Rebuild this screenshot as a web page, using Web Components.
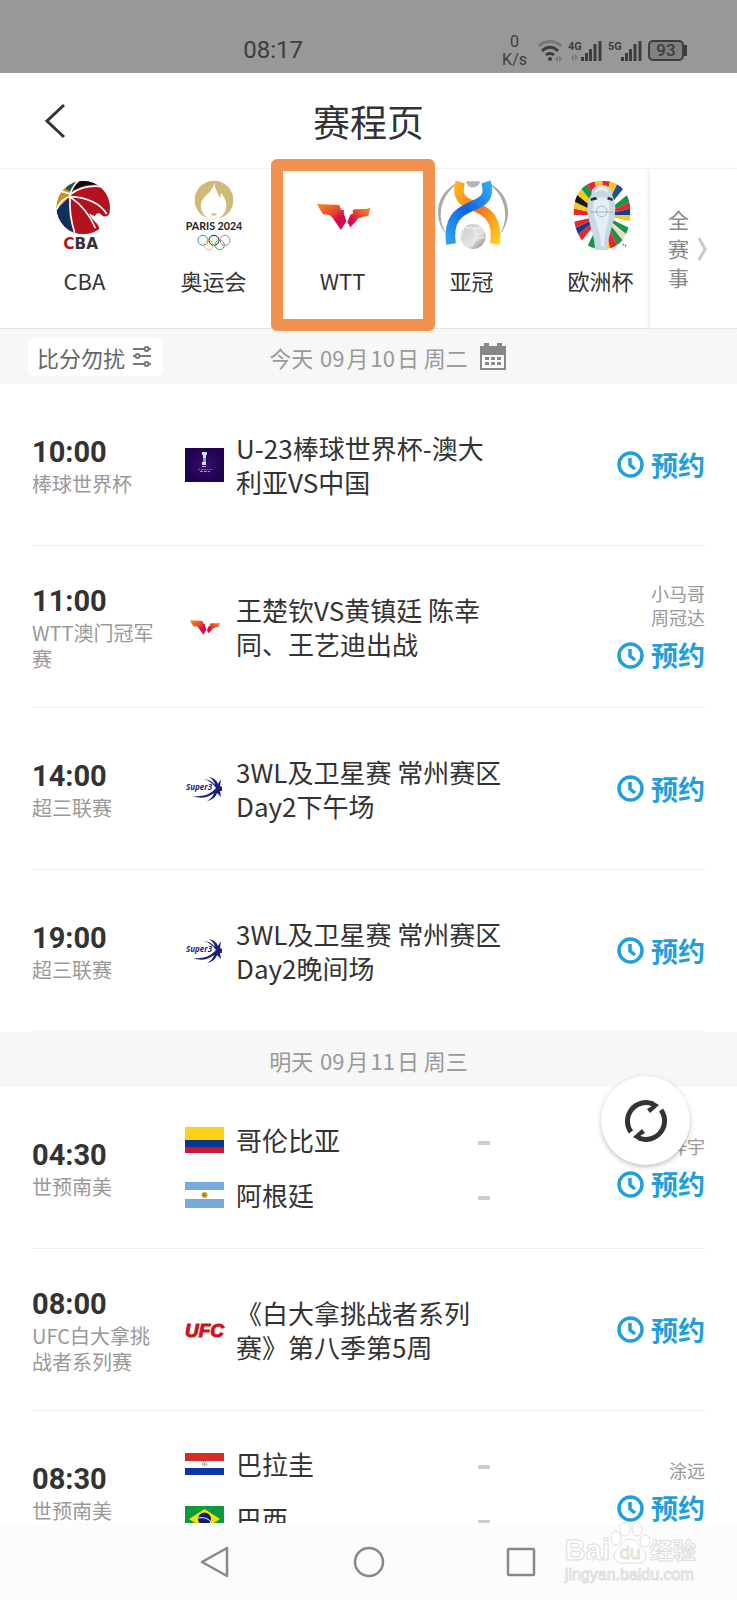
<!DOCTYPE html>
<html lang="zh-CN">
<head>
    <meta charset="UTF-8">
    <meta name="viewport" content="width=device-width, initial-scale=1.0">
    <title>赛程页</title>
    <style>
        body {
            margin: 0;
            background: #fff;
            color: #333;
            font-family: "Noto Sans CJK SC", sans-serif;
        }

        date-bar span {
            padding: 0 2px;
        }
    </style>
</head>
<body>
    <schedule-app>
        <status-bar slot="top" time="08:17"></status-bar>
        <page-header slot="top">赛程页</page-header>
        <league-tabs slot="top">
            <league-tab logo="cba">CBA</league-tab>
            <league-tab logo="paris">奥运会</league-tab>
            <league-tab logo="wtt" marked>WTT</league-tab>
            <league-tab logo="acl">亚冠</league-tab>
            <league-tab logo="euro">欧洲杯</league-tab>
        </league-tabs>

        <date-bar tools>今天 <span>09</span>月<span>10</span>日 周二</date-bar>
        <match-row time="10:00" league="棒球世界杯">
            <match-event logo="baseball">U-23棒球世界杯-澳大利亚VS中国</match-event>
        </match-row>
        <match-row time="11:00" league="WTT澳门冠军赛" hosts="小马哥,周冠达">
            <match-event logo="wtt">王楚钦VS黄镇廷 陈幸同、王艺迪出战</match-event>
        </match-row>
        <match-row time="14:00" league="超三联赛">
            <match-event logo="super3">3WL及卫星赛 常州赛区Day2下午场</match-event>
        </match-row>
        <match-row time="19:00" league="超三联赛" last>
            <match-event logo="super3">3WL及卫星赛 常州赛区Day2晚间场</match-event>
        </match-row>

        <date-bar>明天 <span>09</span>月<span>11</span>日 周三</date-bar>
        <match-row time="04:30" league="世预南美" hosts="梓宇">
            <team-line logo="colombia">哥伦比亚</team-line>
            <team-line logo="argentina">阿根廷</team-line>
        </match-row>
        <match-row time="08:00" league="UFC白大拿挑战者系列赛">
            <match-event logo="ufc">《白大拿挑战者系列赛》第八季第5周</match-event>
        </match-row>
        <match-row time="08:30" league="世预南美" hosts="涂远">
            <team-line logo="paraguay">巴拉圭</team-line>
            <team-line logo="brazil">巴西</team-line>
        </match-row>

        <refresh-button slot="float"></refresh-button>
        <home-bar slot="bottom"></home-bar>
        <page-watermark slot="float"></page-watermark>
    </schedule-app>

    <script>
        // coloured rays behind the Euro trophy
        function rays() {
            const colors = ['#e8262b', '#f7c81e', '#1d4f9f', '#fff', '#169447', '#e8262b', '#12418c', '#f7c81e',
                '#fff', '#169447', '#e8dfc8', '#2a8a4b', '#e8262b', '#f7c81e', '#1a1a1a', '#169447', '#fff', '#e8262b',
                '#12418c', '#e8262b', '#fff', '#e8262b', '#f7c81e', '#1a1a1a', '#f7c81e', '#169447', '#e8262b', '#f7c81e'];
            const step = Math.PI * 2 / colors.length;
            return colors.map((c, i) => {
                const a = -Math.PI / 2 + i * step;
                const p = (t) => `${Math.round(632 + 150 * Math.cos(t))},${Math.round(195 + 150 * Math.sin(t))}`;
                return `<polygon points="632,195 ${p(a)} ${p(a + step)}" fill="${c}"/>`;
            }).join('');
        }

        const LOGOS = {
            cba: `<svg viewBox="60 90 210 210">
                <defs><clipPath id="b"><circle cx="160" cy="173" r="80"/></clipPath></defs>
                <g clip-path="url(#b)">
                    <path fill="#b5121f" d="M75 88h170v170H75z"/>
                    <path fill="#d08e1c" d="M75 88h42l4 46-6 10-37 40z"/>
                    <path fill="#1f5a45" d="M108 88h36l-18 38-18-8z"/>
                    <path fill="#0d0d0f" d="M142 88h62l6 14-44 4-36 14z"/>
                    <path fill="#0f2f5c" d="M78 180l38-36 2 56 14 50H78z"/>
                </g>
                <path d="M208 236c-2-10-8-16-18-26-8-8-12-14-12-20 8 6 14 10 18 6 4-8 12-8 18-2 8 8 16 8 28-6l8 40-22 20z" fill="#fff"/>
                <g fill="none" stroke="#fff" stroke-width="5">
                    <path d="M80 178c10-22 24-36 42-38 50 2 90 22 108 52"/>
                    <path d="M146 92c-20 18-26 32-26 50-2 40 2 70 14 106"/>
                    <path d="M94 124l28 8c24-18 56-28 96-22"/>
                    <path d="M122 142c30 20 56 50 74 92"/>
                </g>
                <text x="100" y="297" font-family="DejaVu Sans" font-weight="700" font-size="46" fill="#333"><tspan fill="#b5121f">C</tspan>BA</text>
            </svg>`,
            paris: `<svg viewBox="447 90 210 210">
                <circle cx="552" cy="150" r="58" fill="#d0ba79"/>
                <path fill="#fff" d="M552 99c4 18 8 22 12 32 2 5 4 8 4 12 5-4 5-9 5-16 12 18 20 34 14 52-5 15-15 25-27 29h-19c-12-5-22-15-27-29-6-22 6-34 18-46 12-11 18-20 20-34z"/>
                <path d="M543 192c6-3 12-3 18 0-4 6-14 6-18 0z" fill="#d0ba79"/>
                <text x="552" y="240" text-anchor="middle" font-family="Lato" font-weight="700" font-size="32" fill="#222">PARIS 2024</text>
                <g fill="none" stroke-width="3">
                    <circle cx="519" cy="271" r="15" stroke="#2f8fcb"/>
                    <circle cx="552" cy="271" r="15" stroke="#222"/>
                    <circle cx="585" cy="271" r="15" stroke="#e2707f"/>
                    <circle cx="536" cy="285" r="14" stroke="#e9c552"/>
                    <circle cx="569" cy="285" r="14" stroke="#3fae79"/>
                </g>
            </svg>`,
            wtt: `<svg viewBox="831 90 210 210">
                <defs>
                    <linearGradient id="l" x1="0" y1="0" x2=".8" y2="1"><stop offset=".1" stop-color="#f58220"/><stop offset=".5" stop-color="#e8402f"/><stop offset=".7" stop-color="#d70b4a"/></linearGradient>
                    <linearGradient id="r" x1="1" y1="0" x2="0" y2="1"><stop offset=".1" stop-color="#f58220"/><stop offset=".45" stop-color="#e8402f"/><stop offset=".7" stop-color="#d70b4a"/></linearGradient>
                </defs>
                <path fill="url(#l)" d="M858 162l67 3 5 14 10 2-2 8 8 24-16 27-25-36-9-9-20-2-10-16z"/>
                <path fill="url(#r)" d="M1018 174l-14 3-34 1-6 4 3 8-9 4-9 23 9 15 14-15 10-12 12-4 18-4z"/>
            </svg>`,
            acl: `<svg viewBox="137 90 210 210">
                <defs>
                    <linearGradient id="o" x1="0" y1="0" x2="1" y2="1"><stop offset="0" stop-color="#ffb21c"/><stop offset=".5" stop-color="#f4731c"/><stop offset="1" stop-color="#ffcb1e"/></linearGradient>
                    <linearGradient id="u" x1="1" y1="0" x2="0" y2="1"><stop offset="0" stop-color="#2fa8f2"/><stop offset=".5" stop-color="#1260e0"/><stop offset="1" stop-color="#29a3ee"/></linearGradient>
                    <linearGradient id="g" x1="0" y1="0" x2="1" y2="1"><stop offset="0" stop-color="#c9c9c9"/><stop offset=".6" stop-color="#e4e4e4"/><stop offset="1" stop-color="#777"/></linearGradient>
                </defs>
                <path fill="#aaa" d="M208 94c-78 30-86 116-40 162-34-46-26-120 40-162zM282 94c78 30 86 116 40 162 34-46 26-120-40-162z"/>
                <path fill="#b5b5b5" d="M224 94h42c-4 24-38 26-42 0z"/>
                <g fill="none" stroke-width="29">
                    <path stroke="url(#o)" d="M207 96C190 150 226 158 256 172S322 206 311 282"/>
                    <path stroke="url(#u)" d="M284 96C301 150 264 158 234 172S168 206 179 282"/>
                </g>
                <circle cx="245" cy="259" r="38" fill="url(#g)"/>
                <path d="M218 232l32 4 28-4M250 236l4 30-14 24M254 266l26-4M218 232l-10 30" stroke="#f5f5f5" stroke-width="3" fill="none"/>
            </svg>`,
            euro: `<svg viewBox="523 90 210 210">
                <defs><clipPath id="e"><path d="M632 92c52 0 84 34 84 94 0 68-30 112-84 112s-86-44-86-112c0-60 34-94 86-94z"/></clipPath></defs>
                <g clip-path="url(#e)">${rays()}</g>
                <path fill="#c5d9e6" d="M600 132c-4-36 64-36 60 0l6 14c18 46-18 96-18 154h-38c0-58-36-108-18-154z"/>
                <path fill="#f8e7e2" d="M610 130c-2-26 42-26 40 0-14-12-28-12-40 0z"/>
                <path fill="#e4eef4" d="M610 148c14-8 28-8 40 0 14 42-12 84-12 140h-10c0-56-36-98-18-140z"/>
                <path d="M596 146l14-6 8 8-20 5zM664 146l-14-6-4 8 16 5z" fill="#2b2f45"/>
                <circle cx="630" cy="184" r="16" fill="none" stroke="#7f9db4" stroke-width="2"/>
                <path d="M596 186h68" stroke="#7f9db4" stroke-width="2"/>
                <path d="M692 284h6M702 284v7" stroke="#4a6a80" stroke-width="3"/>
            </svg>`,
            baseball: `<svg viewBox="0 0 39 34">
                <defs><radialGradient id="p"><stop offset="0" stop-color="#3b0a70"/><stop offset="1" stop-color="#1f0350"/></radialGradient></defs>
                <path fill="url(#p)" d="M0 0h39v34H0z"/>
                <path fill="#d8e4ff" d="M17 4h5v3h-1v3h-3V7h-1zM17 14h4v3h-4z"/>
                <path fill="#6aa9e8" d="M18 10h3v4h-3z"/>
                <path stroke="#b9a3d8" d="M17 18.500h4"/>
                <path stroke="#a2508f" stroke-dasharray="2 1" d="M13 21.500h14"/>
                <path stroke="#9e92bd" stroke-dasharray="3 1" d="M15 23.500h10"/>
            </svg>`,
            super3: `<svg viewBox="0 0 39 28">
                <text x="1" y="15" font-family="Open Sans" font-style="italic" font-weight="700" font-size="8" fill="#1a1f7a">Super3</text>
                <path fill="#1a1f7a" d="M18 4c5 0 9 2 12 6-1-4-3-6-6-8 5 1 8 4 9 7l3-5-1 7 2 1v4h-2l1 6-4-4c-1 4-5 7-10 8 4-2 6-5 7-8-6 5-14 6-21 3 9 1 16-1 21-6l2-2c-3-4-7-8-13-9z"/>
            </svg>`,
            ufc: `<svg viewBox="0 0 39 26">
                <text x="0" y="20" font-family="Liberation Sans" font-style="italic" font-weight="700" font-size="19" fill="#c8141c" stroke="#c8141c">UFC</text>
            </svg>`,
            colombia: `<svg viewBox="0 0 39 26"><path fill="#fcd21b" d="M0 0h39v13H0z"/><path fill="#0a3690" d="M0 13h39v7H0z"/><path fill="#cc1433" d="M0 20h39v6H0z"/></svg>`,
            argentina: `<svg viewBox="0 0 39 26"><path fill="#75aadb" d="M0 0h39v26H0z"/><path fill="#fff" d="M0 8h39v9H0z"/><circle cx="19.500" cy="13" r="3" fill="#d09a3a"/><circle cx="19.500" cy="13" r="1" fill="#8a5a20"/></svg>`,
            paraguay: `<svg viewBox="0 0 39 22"><path fill="#d22e25" d="M0 0h39v8H0z"/><path fill="#fff" d="M0 8h39v7H0z"/><path fill="#0c36a5" d="M0 15h39v7H0z"/><circle cx="19.500" cy="11" r="2.500" fill="none" stroke="#999" stroke-dasharray="2 1"/><circle cx="19.500" cy="11" r="1" fill="#6a8a5a"/></svg>`,
            brazil: `<svg viewBox="0 0 39 26"><path fill="#0a9b3b" d="M0 0h39v26H0z"/><path fill="#fee000" d="M19.500 3L35 13 19.500 23 4 13z"/><circle cx="19.500" cy="13" r="6.500" fill="#0b2170"/><path d="M13 12c5-1 10 0 13 4" stroke="#fff" fill="none"/></svg>`
        };

        function define(name, render) {
            customElements.define(name, class extends HTMLElement {
                constructor() {
                    super();
                    this.attachShadow({ mode: 'open' });
                }

                connectedCallback() {
                    this.shadowRoot.innerHTML = render(this);
                }
            });
        }

        define('schedule-app', () => `
            <style>
                :host {
                    display: flex;
                    flex-direction: column;
                    height: 100vh;
                    position: relative;
                }
                main {
                    flex: 1;
                    min-height: 0;
                    overflow: hidden;
                }
            </style>
            <slot name="top"></slot>
            <main><slot></slot></main>
            <slot name="bottom"></slot>
            <slot name="float"></slot>
        `);

        define('status-bar', (el) => `
            <style>
                :host {
                    display: flex;
                    justify-content: space-between;
                    box-sizing: border-box;
                    height: 73px;
                    padding: 28px 50px 0 33%;
                    background: #989898;
                    color: #3d3d3d;
                    font-family: Roboto, sans-serif;
                }
                time {
                    font-size: 24px;
                    line-height: 45px;
                }
                .icons {
                    display: flex;
                    gap: 6px;
                    height: 45px;
                    align-items: center;
                }
                .speed {
                    font-size: 16px;
                    line-height: 18px;
                    text-align: center;
                    margin-right: 5px;
                }
                svg { display: block; }
                .battery {
                    display: flex;
                    align-items: center;
                }
                .battery span {
                    width: 32px;
                    border: 2px solid #3d3d3d;
                    border-radius: 5px;
                    font-size: 17px;
                    font-weight: 500;
                    line-height: 17px;
                    text-align: center;
                    background: #808080;
                }
                .battery i {
                    width: 3px;
                    height: 11px;
                    background: #3d3d3d;
                }
            </style>
            <time>${el.getAttribute('time')}</time>
            <div class="icons">
                <div class="speed">0<br>K/s</div>
                <svg width="24" height="22" viewBox="0 0 24 22" fill="none" stroke="#3d3d3d" stroke-width="3">
                    <path d="M1 6c6-6 16-6 22 0" stroke="#777"/>
                    <path d="M4 11c5-5 11-5 16 0M8 15c2-2 6-2 8 0"/>
                    <circle cx="12" cy="19" r="1" stroke-width="2"/>
                    <path d="M17 19l3-3v6zM24 19l-3-3v6z" fill="#777" stroke="none"/>
                </svg>
                ${['4G', '5G'].map((g) => `<svg width="34" height="22" viewBox="0 0 34 22">
                    <text y="10" font-family="Roboto" font-weight="700" font-size="11" fill="#3d3d3d">${g}</text>
                    <path d="M14.500 21v-4M18.500 21v-8M22.500 21v-12M27 21V4M32 21V1" stroke="#3d3d3d" stroke-width="3"/>
                    ${g === '4G' ? '<path d="M3 18l3-4v7M7 14v7l3-4" fill="#777"/>' : ''}
                </svg>`).join('')}
                <div class="battery"><span>93</span><i></i></div>
            </div>
        `);

        define('page-header', () => `
            <style>
                :host {
                    display: grid;
                    grid-template-columns: 1fr auto 1fr;
                    align-items: center;
                    height: 95px;
                    border-bottom: 1px solid #f0f0f0;
                }
                button {
                    justify-self: start;
                    margin-left: 44px;
                    padding: 0;
                    border: 0;
                    background: none;
                }
                svg { display: block; }
                h1 {
                    margin: 0;
                    font-size: 37px;
                    font-weight: 400;
                }
            </style>
            <button aria-label="返回">
                <svg width="24" height="36" viewBox="0 0 24 36"><path d="M20 2L3 18l17 16" fill="none" stroke="#333" stroke-width="3"/></svg>
            </button>
            <h1><slot></slot></h1>
        `);

        define('league-tabs', () => `
            <style>
                :host {
                    display: flex;
                    height: 159px;
                    border-bottom: 1px solid #e4e4e4;
                }
                nav {
                    display: flex;
                    flex: 1;
                    min-width: 0;
                    padding-left: 20px;
                }
                button {
                    display: flex;
                    align-items: center;
                    justify-content: center;
                    gap: 7px;
                    width: 87px;
                    flex: none;
                    padding: 0 13px 0 0;
                    border: 0;
                    background: #fff;
                    box-shadow: -2px 0 3px #eee;
                    color: #888;
                    font: inherit;
                    font-size: 21px;
                    line-height: 29px;
                    z-index: 1;
                }
                .all { width: 22px; }
            </style>
            <nav><slot></slot></nav>
            <button>
                <span class="all">全赛事</span>
                <svg width="10" height="26" viewBox="0 0 10 26"><path d="M2 2l6 11-6 11" fill="none" stroke="#c8c8c8" stroke-width="3"/></svg>
            </button>
        `);

        define('league-tab', (el) => `
            <style>
                :host {
                    display: block;
                    position: relative;
                    flex: none;
                    width: 129px;
                }
                a {
                    display: flex;
                    flex-direction: column;
                    align-items: center;
                    gap: 15px;
                    padding-top: 11px;
                    color: inherit;
                    text-decoration: none;
                    font-size: 22px;
                    line-height: 30px;
                }
                svg {
                    display: block;
                    width: 70px;
                    height: 70px;
                    overflow: visible;
                }
                :host([marked])::after {
                    content: "";
                    position: absolute;
                    z-index: 2;
                    top: -10px;
                    left: -7px;
                    box-sizing: border-box;
                    width: 164px;
                    height: 172px;
                    border: 12px solid #f3924e;
                    border-radius: 6px;
                }
            </style>
            <a href="#${el.getAttribute('logo')}">${LOGOS[el.getAttribute('logo')]}<span><slot></slot></span></a>
        `);

        define('date-bar', (el) => `
            <style>
                :host {
                    display: grid;
                    grid-template-columns: 1fr auto 1fr;
                    align-items: center;
                    height: 55px;
                    background: #f7f7f7;
                    color: #999;
                    font-size: 22px;
                    line-height: 32px;
                }
                button {
                    display: flex;
                    align-items: center;
                    gap: 8px;
                    border: 0;
                    padding: 0;
                    background: none;
                    color: #666;
                    font: inherit;
                    line-height: 38px;
                }
                .quiet {
                    justify-self: start;
                    margin-left: 28px;
                    padding: 0 12px 0 9px;
                    border-radius: 6px;
                    background: #fff;
                }
                .calendar { margin-left: 12px; }
                .date { grid-column: 2; }
            </style>
            ${el.hasAttribute('tools') ? `<button class="quiet">比分勿扰
                <svg width="18" height="21" viewBox="0 0 18 21" fill="none" stroke="#777" stroke-width="2">
                    <path d="M0 3h11M16 3h2M0 10h2M7 10h11M0 18h11M16 18h2"/>
                    <circle cx="13.500" cy="3" r="2"/><circle cx="4.500" cy="10" r="2"/><circle cx="13.500" cy="18" r="2"/>
                </svg></button>` : ''}
            <div class="date"><slot></slot></div>
            ${el.hasAttribute('tools') ? `<button class="calendar" aria-label="日历">
                <svg width="26" height="27" viewBox="0 0 26 27">
                    <path fill="#888" d="M0 3h4V0h5v3h8V0h5v3h4v24H0z"/>
                    <path fill="#fff" d="M2 12h22v13H2z"/>
                    <path d="M5 15.500h16M5 20.500h16" stroke="#888" stroke-width="3" stroke-dasharray="4 2"/>
                </svg></button>` : ''}
        `);

        define('match-row', (el) => {
            const hosts = (el.getAttribute('hosts') || '').split(',').filter(Boolean);
            return `
            <style>
                :host {
                    display: grid;
                    grid-template-columns: 128px minmax(0, 323px) 1fr;
                    column-gap: 25px;
                    align-items: center;
                    height: 161px;
                    margin: 0 32px;
                    border-bottom: 1px solid #ededed;
                }
                :host([last]) { border-color: #f7f7f7; }
                time {
                    display: block;
                    font: 700 29px/38px Roboto, sans-serif;
                }
                .league {
                    color: #999;
                    font-size: 20px;
                    line-height: 26px;
                }
                .teams {
                    display: flex;
                    flex-direction: column;
                    gap: 19px;
                }
                .side {
                    display: flex;
                    flex-direction: column;
                    align-items: flex-end;
                    gap: 9px;
                }
                .hosts {
                    color: #999;
                    font-size: 18px;
                    line-height: 24px;
                }
                button {
                    display: flex;
                    align-items: center;
                    gap: 7px;
                    border: 0;
                    padding: 0;
                    background: none;
                    color: #1f9fdc;
                    font: inherit;
                    font-size: 27px;
                    font-weight: 700;
                    line-height: 34px;
                }
            </style>
            <div>
                <time>${el.getAttribute('time')}</time>
                <div class="league">${el.getAttribute('league')}</div>
            </div>
            <div class="teams"><slot></slot></div>
            <div class="side">
                ${hosts.length ? `<div class="hosts">${hosts.join('<br>')}</div>` : ''}
                <button><svg width="27" height="27" viewBox="0 0 27 27" fill="none" stroke="#1f9fdc" stroke-width="3.5">
                    <circle cx="13.500" cy="13.500" r="11.500"/><path d="M13 7v7l5 4"/>
                </svg>预约</button>
            </div>`;
        });

        define('match-event', (el) => `
            <style>
                :host {
                    display: flex;
                    align-items: center;
                    gap: 12px;
                    font-size: 26px;
                    line-height: 34px;
                }
                svg {
                    display: block;
                    flex: none;
                    width: 39px;
                    overflow: visible;
                }
            </style>
            ${LOGOS[el.getAttribute('logo')]}<span><slot></slot></span>
        `);

        define('team-line', (el) => `
            <style>
                :host {
                    display: flex;
                    align-items: center;
                    gap: 12px;
                    padding-right: 18px;
                    font-size: 26px;
                    line-height: 36px;
                }
                svg {
                    display: block;
                    width: 39px;
                }
                i {
                    width: 12px;
                    height: 4px;
                    margin: 6px 0 0 auto;
                    background: #ccc;
                }
            </style>
            ${LOGOS[el.getAttribute('logo')]}<span><slot></slot></span><i></i>
        `);

        define('refresh-button', () => `
            <style>
                :host {
                    display: block;
                    position: absolute;
                    right: 47px;
                    bottom: 435px;
                }
                button {
                    display: grid;
                    place-items: center;
                    width: 89px;
                    height: 89px;
                    border: 0;
                    border-radius: 50%;
                    background: #fff;
                    box-shadow: 0 2px 5px rgba(0, 0, 0, 0.25);
                }
            </style>
            <button aria-label="刷新">
                <svg width="44" height="44" viewBox="0 0 44 44" fill="none" stroke="#333" stroke-width="5">
                    <path d="M7 33A18.500 18.500 0 0 1 29 5"/><path d="M37 11A18.500 18.500 0 0 1 15 39"/>
                    <path d="M28 2l7 4-9 8-3-4 5-3zM16 42l-7-4 9-8 3 4-5 3z" fill="#333" stroke="none"/>
                </svg>
            </button>
        `);

        define('home-bar', () => `
            <style>
                :host {
                    display: flex;
                    justify-content: center;
                    align-items: center;
                    gap: 121px;
                    height: 77px;
                    background: #fcfcfc;
                }
                button {
                    border: 0;
                    padding: 0;
                    background: none;
                }
                svg {
                    display: block;
                    fill: none;
                    stroke: #888;
                    stroke-width: 2.5;
                    stroke-linejoin: round;
                }
            </style>
            <button aria-label="返回"><svg width="32" height="32"><path d="M27 2v28L2 16z"/></svg></button>
            <button aria-label="主页"><svg width="32" height="32"><circle cx="16" cy="16" r="14"/></svg></button>
            <button aria-label="最近任务"><svg width="32" height="32"><rect x="2" y="3" width="26" height="26" rx="1"/></svg></button>
        `);

        define('page-watermark', () => `
            <style>
                :host {
                    position: absolute;
                    right: 41px;
                    bottom: 15px;
                    color: #fff;
                    font-family: "Liberation Sans", "Noto Sans CJK SC", sans-serif;
                    -webkit-text-stroke: 1px #ddd;
                }
                .brand {
                    display: flex;
                    align-items: flex-end;
                    font-size: 29px;
                    font-weight: 700;
                    line-height: 29px;
                }
                .cn {
                    font-size: 23px;
                    line-height: 27px;
                }
                svg { display: block; }
                .site {
                    font-size: 16px;
                    line-height: 20px;
                }
            </style>
            <div class="brand">
                <span>Bai</span>
                <svg width="40" height="44" viewBox="0 0 40 44" fill="#fff" stroke="#ddd">
                    <ellipse cx="15" cy="8" rx="5" ry="7"/><ellipse cx="27" cy="8" rx="5" ry="7"/>
                    <ellipse cx="6" cy="17" rx="5" ry="7"/><ellipse cx="35" cy="20" rx="5" ry="6"/>
                    <path d="M20 18c7 0 9 8 14 12 4 5 1 12-5 12-5 0-13 0-18 0-6 0-9-7-5-12 5-4 7-12 14-12z"/>
                    <text x="20" y="38" text-anchor="middle" font-size="19" font-weight="400">du</text>
                </svg>
                <span class="cn">经验</span>
            </div>
            <div class="site">jingyan.baidu.com</div>
        `);
    </script>
</body>
</html>
